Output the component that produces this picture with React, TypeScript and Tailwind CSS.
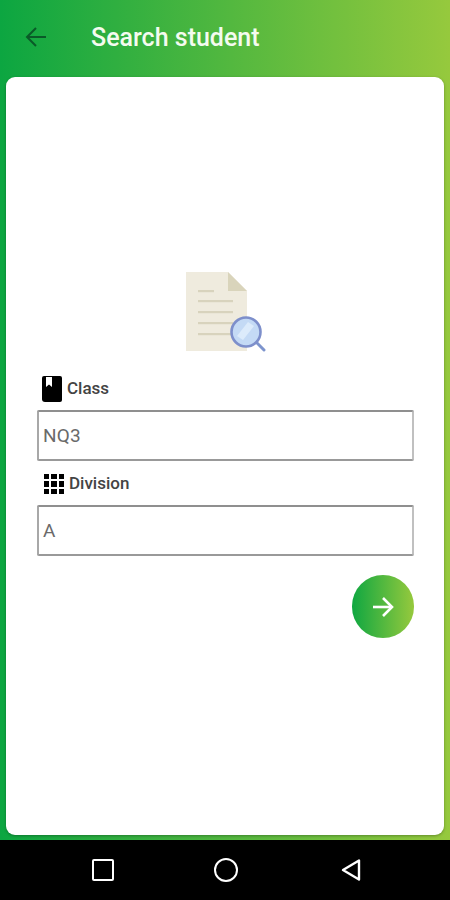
import React from 'react';

const DocSearchIcon = () => (
  <svg width="82" height="84" viewBox="0 0 82 84" className="block">
    <path d="M1 2 H43 L62 21 V81 H1 Z" fill="#efebde" />
    <path d="M43 2 L62 21 H43 Z" fill="#d9d4bb" />
    <g fill="#d8d3bd">
      <rect x="13" y="20" width="16" height="2.2" />
      <rect x="13" y="30" width="35" height="2.2" />
      <rect x="13" y="41" width="35" height="2.2" />
      <rect x="13" y="52" width="35" height="2.2" />
      <rect x="13" y="63" width="35" height="2.2" />
    </g>
    <path d="M70 71 L79 80" stroke="#7d94cd" strokeWidth="3" strokeLinecap="round" />
    <circle cx="61" cy="62" r="14.5" fill="#c4daf5" stroke="#7d8fcb" strokeWidth="2.6" />
    <path d="M52 66 L63 52 L69 56 L58 70 Z" fill="#dcebfb" />
  </svg>
);

const BookIcon = () => (
  <svg width="20" height="26" viewBox="0 0 20 26" className="block">
    <path d="M2 0 H18 A2 2 0 0 1 20 2 V24 A2 2 0 0 1 18 26 H3 A3 3 0 0 1 0 23 V2 A2 2 0 0 1 2 0 Z" fill="#000" />
    <path d="M4 1 H10 V11 L7 8.5 L4 11 Z" fill="#fff" />
  </svg>
);

const GridIcon = () => (
  <div className="grid grid-cols-3 gap-[2px] w-5">
    {Array.from({ length: 9 }).map((_, i) => (
      <span key={i} className="w-[5.3px] h-[5.3px] bg-black" />
    ))}
  </div>
);

const Field = ({ value }: { value: string }) => (
  <div className="h-[51px] border-2 border-t-[#8f8f8f] border-l-[#a8a8a8] border-r-[#c0c0c0] border-b-[#999999] rounded-[2px] flex items-center pl-[4px] pt-[1px] text-[19px] text-[#6a6a6a] tracking-[0.2px]">
    {value}
  </div>
);

export default function App() {
  return (
    <div className="w-[450px] h-[900px] flex flex-col bg-black font-['Roboto',sans-serif] overflow-hidden">
      <div className="h-[840px] flex flex-col bg-linear-to-r/srgb from-[#0ca641] to-[#96c93d]">
        <header className="h-[77px] shrink-0 flex items-center pl-[24px] pb-[4px]">
          <svg width="24" height="24" viewBox="0 0 24 24" fill="none" stroke="#0a5a28" strokeWidth="2" className="mr-[43px]">
            <path d="M22 12 H3" />
            <path d="M12 3 L3 12 L12 21" />
          </svg>
          <h1 className="text-[25px] leading-none font-medium text-[#f4fbef] mt-[2px]">Search student</h1>
        </header>
        <main className="h-[758px] mx-[6px] bg-white rounded-[9px] shadow-[0_1px_3px_rgba(0,0,0,0.3)] pl-[31px] pr-[30px] pt-[193px]">
          <div className="flex justify-center">
            <DocSearchIcon />
          </div>
          <div className="flex items-center gap-[5px] mt-[21px] mb-[8px] pl-[5px] h-[27px]">
            <BookIcon />
            <span className="text-[17px] font-medium text-[#444444]">Class</span>
          </div>
          <Field value="NQ3" />
          <div className="flex items-center gap-[5px] mt-[11px] mb-[9px] pl-[7px] h-[24px]">
            <GridIcon />
            <span className="text-[17px] font-medium text-[#444444]">Division</span>
          </div>
          <Field value="A" />
          <div className="flex justify-end mt-[19px]">
            <button className="w-[62px] h-[63px] rounded-full bg-linear-to-r/srgb from-[#0fa741] to-[#96c93d] flex items-center justify-center">
              <svg width="22" height="22" viewBox="0 0 22 22" fill="none" stroke="#fff" strokeWidth="2.6">
                <path d="M1 11 H20" />
                <path d="M11 2 L20 11 L11 20" />
              </svg>
            </button>
          </div>
        </main>
      </div>
      <nav className="h-[60px] flex items-center pl-[92px]">
        <span className="block w-[22px] h-[22px] border-[2.5px] border-white rounded-[2px]" />
        <span className="block w-[24px] h-[24px] border-[2.5px] border-white rounded-full ml-[100px]" />
        <svg width="20" height="24" viewBox="0 0 20 24" fill="none" stroke="#fff" strokeWidth="2.4" strokeLinejoin="round" className="ml-[103px]">
          <path d="M18 2.5 V21.5 L2 12 Z" />
        </svg>
      </nav>
    </div>
  );
}
